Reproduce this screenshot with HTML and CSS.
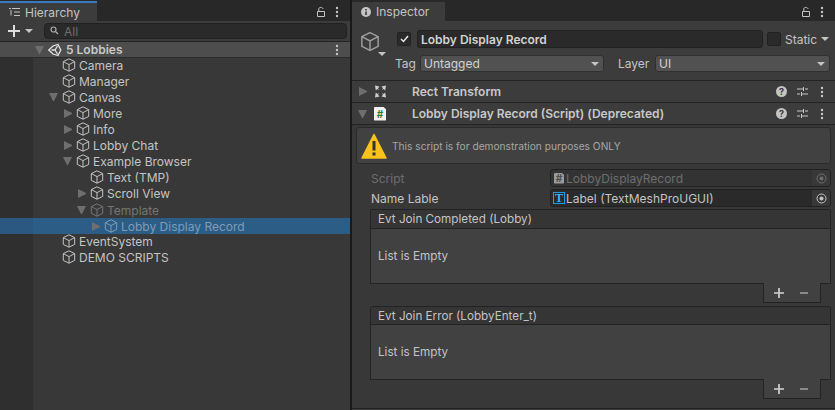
FILE: index.html
```html
<!DOCTYPE html>
<html lang="en">
<head>
    <meta charset="UTF-8">
    <title>Hierarchy / Inspector</title>
    <link rel="stylesheet" href="styles.css">
</head>
<body>

    <svg class="defs" width="0" height="0">
        <symbol id="cube" viewBox="0 0 14 14">
            <path d="M7 .8 12.700 3.600v6.800L7 13.200 1.300 10.400V3.600zM1.300 3.600 7 6.600l5.700-3M7 6.600v6.600" fill="none" stroke="currentColor" stroke-width="1"/>
        </symbol>
        <symbol id="dots" viewBox="0 0 4 12">
            <circle cx="2" cy="2" r="1.200" fill="currentColor"/><circle cx="2" cy="6" r="1.200" fill="currentColor"/><circle cx="2" cy="10" r="1.200" fill="currentColor"/>
        </symbol>
        <symbol id="lock" viewBox="0 0 10 12">
            <path d="M1.500 5.500h7v5h-7zM2.800 5.500V3C2.800 .8 6.800 .8 7 3" fill="none" stroke="currentColor" stroke-width="1"/>
        </symbol>
        <symbol id="sliders" viewBox="0 0 11 11">
            <path d="M0 3h6M8 3h3M6.500 1v4M0 8h3M5 8h6M4.500 6v4" fill="none" stroke="currentColor" stroke-width="1"/>
        </symbol>
        <symbol id="target" viewBox="0 0 11 11">
            <circle cx="5.500" cy="5.500" r="4.500" fill="none" stroke="currentColor"/><circle cx="5.500" cy="5.500" r="2" fill="currentColor"/>
        </symbol>
        <symbol id="plus" viewBox="0 0 12 12">
            <path d="M6 0v12M0 6h12" stroke="currentColor" stroke-width="2"/>
        </symbol>
    </svg>

    <div class="window">
        <section class="panel hierarchy">
            <div class="tabstrip">
                <div class="tab tab-h">
                    <svg class="tab-icon" width="11" height="10" viewBox="0 0 11 10"><path d="M3 1.500h8M5 5h6M5 8.500h6M0 1.500h2M2 3v5.500" stroke="#c4c4c4" fill="none"/></svg>
                    Hierarchy
                </div>
                <div class="tab-tools">
                    <svg width="10" height="12"><use href="#lock"/></svg>
                    <svg width="4" height="12"><use href="#dots"/></svg>
                </div>
            </div>
            <div class="toolbar">
                <svg class="plus" width="12" height="12"><use href="#plus"/></svg><span class="caret"></span>
                <div class="search">
                    <svg width="10" height="10" viewBox="0 0 10 10"><circle cx="3.500" cy="3.500" r="2.500" fill="none" stroke="#b0b0b0" stroke-width="1.200"/><path d="M5.500 5.500 8 8" stroke="#b0b0b0" stroke-width="1.200"/></svg>
                    <span>All</span>
                </div>
            </div>
            <div class="tree">
                <div class="scene">
                    <span class="arrow down"></span>
                    <svg class="unity" width="14" height="14" viewBox="0 0 14 14"><path d="M.8 7 5 3 10 1.500 12.800 7 10 12.500 5 11zM3.500 7H7l2.500-4M7 7l2.500 4" fill="none" stroke="#e4e4e4" stroke-width="1.300"/></svg>
                    <b>5 Lobbies</b>
                    <svg class="scene-dots" width="4" height="12"><use href="#dots"/></svg>
                </div>
                <div class="row d1"><span class="arrow none"></span><svg class="cube"><use href="#cube"/></svg>Camera</div>
                <div class="row d1"><span class="arrow none"></span><svg class="cube"><use href="#cube"/></svg>Manager</div>
                <div class="row d1"><span class="arrow down"></span><svg class="cube"><use href="#cube"/></svg>Canvas</div>
                <div class="row d2"><span class="arrow right"></span><svg class="cube"><use href="#cube"/></svg>More</div>
                <div class="row d2"><span class="arrow right"></span><svg class="cube"><use href="#cube"/></svg>Info</div>
                <div class="row d2"><span class="arrow right"></span><svg class="cube"><use href="#cube"/></svg>Lobby Chat</div>
                <div class="row d2"><span class="arrow down"></span><svg class="cube"><use href="#cube"/></svg>Example Browser</div>
                <div class="row d3"><span class="arrow none"></span><svg class="cube"><use href="#cube"/></svg>Text (TMP)</div>
                <div class="row d3"><span class="arrow right"></span><svg class="cube"><use href="#cube"/></svg>Scroll View</div>
                <div class="row d3 off"><span class="arrow down"></span><svg class="cube"><use href="#cube"/></svg>Template</div>
                <div class="row d4 off selected"><span class="arrow right"></span><svg class="cube"><use href="#cube"/></svg>Lobby Display Record</div>
                <div class="row d1"><span class="arrow none"></span><svg class="cube"><use href="#cube"/></svg>EventSystem</div>
                <div class="row d1"><span class="arrow none"></span><svg class="cube"><use href="#cube"/></svg>DEMO SCRIPTS</div>
            </div>
        </section>

        <section class="panel inspector">
            <div class="tabstrip">
                <div class="tab tab-i">
                    <svg class="tab-icon" width="10" height="10" viewBox="0 0 10 10"><circle cx="5" cy="5" r="5" fill="#c4c4c4"/><path d="M5 2v1.500M5 4.500V8" stroke="#3c3c3c" stroke-width="1.600"/></svg>
                    Inspector
                </div>
                <div class="tab-tools">
                    <svg width="10" height="12"><use href="#lock"/></svg>
                    <svg width="4" height="12"><use href="#dots"/></svg>
                </div>
            </div>

            <div class="object-head">
                <div class="big-cube">
                    <svg width="20" height="21"><use href="#cube"/></svg>
                    <span class="caret small"></span>
                </div>
                <div class="head-fields">
                    <div class="head-row">
                        <span class="check on"><svg width="9" height="8" viewBox="0 0 9 8"><path d="M1 4l2.500 2.500L8 1" fill="none" stroke="#eee" stroke-width="1.400"/></svg></span>
                        <div class="name-field">Lobby Display Record</div>
                        <span class="check"></span>
                        <span class="static">Static</span><span class="caret"></span>
                    </div>
                    <div class="head-row tag-row">
                        <span class="tag-label">Tag</span>
                        <div class="dropdown tag-drop">Untagged<span class="caret"></span></div>
                        <span class="layer-label">Layer</span>
                        <div class="dropdown layer-drop">UI<span class="caret"></span></div>
                    </div>
                </div>
            </div>

            <div class="component">
                <span class="arrow right"></span>
                <svg class="comp-icon" width="13" height="13" viewBox="0 0 13 13"><path d="M1 .5 5.500 1.500 4 3.200 5.200 5 3.400 4 1.800 5.500zM12 .5 7.500 1.500 9 3.200 7.800 5 9.600 4 11.200 5.500zM1 12.500 5.500 11.500 4 9.800 5.200 8 3.400 9 1.800 7.500zM12 12.500 7.500 11.500 9 9.800 7.800 8 9.600 9 11.200 7.500z" fill="#cfcfcf"/></svg>
                <b>Rect Transform</b>
                <span class="comp-tools">
                    <span class="help">?</span>
                    <svg class="sliders" width="11" height="11"><use href="#sliders"/></svg>
                    <svg width="4" height="12"><use href="#dots"/></svg>
                </span>
            </div>
            <div class="component">
                <span class="arrow down"></span>
                <span class="script-icon">#</span>
                <b>Lobby Display Record (Script) (Deprecated)</b>
                <span class="comp-tools">
                    <span class="help">?</span>
                    <svg class="sliders" width="11" height="11"><use href="#sliders"/></svg>
                    <svg width="4" height="12"><use href="#dots"/></svg>
                </span>
            </div>

            <div class="comp-body">
                <div class="warning">
                    <svg width="26" height="26" viewBox="0 0 26 26"><path d="M13 1.500 25 25H1z" fill="#fcc21b" stroke="#fcc21b" stroke-width="1.500" stroke-linejoin="round"/><path d="M13 8v9.500M13 19.500v3" stroke="#333" stroke-width="3"/></svg>
                    <span>This script is for demonstration purposes ONLY</span>
                </div>

                <div class="prop off">
                    <span class="prop-label">Script</span>
                    <div class="objfield">
                        <span class="script-icon mini">#</span>LobbyDisplayRecord
                        <span class="pick"><svg width="11" height="11"><use href="#target"/></svg></span>
                    </div>
                </div>
                <div class="prop">
                    <span class="prop-label">Name Lable</span>
                    <div class="objfield">
                        <span class="tmp-icon">T</span>Label (TextMeshProUGUI)
                        <span class="pick"><svg width="11" height="11"><use href="#target"/></svg></span>
                    </div>
                </div>

                <div class="list">
                    <div class="list-head">Evt Join Completed (Lobby)</div>
                    <div class="list-body">List is Empty</div>
                    <div class="list-foot"><svg class="add" width="10" height="10"><use href="#plus"/></svg><span class="rem"></span></div>
                </div>
                <div class="list">
                    <div class="list-head">Evt Join Error (LobbyEnter_t)</div>
                    <div class="list-body">List is Empty</div>
                    <div class="list-foot"><svg class="add" width="10" height="10"><use href="#plus"/></svg><span class="rem"></span></div>
                </div>
            </div>
            <div class="end-line"></div>
        </section>
    </div>

</body>
</html>
```

FILE: styles.css
```css
* {
    box-sizing: border-box;
}
html, body {
    margin: 0;
    height: 100%;
    overflow: hidden;
}
body {
    font-family: Inter, "Liberation Sans", sans-serif;
    font-size: 12px;
    color: #c4c4c4;
    background: #191919;
}
b {
    font-weight: 600;
}
.defs {
    position: absolute;
}
.window {
    display: flex;
    height: 410px;
    gap: 2px;
}
.panel {
    background: #383838;
    height: 100%;
}
.hierarchy {
    width: 350px;
}
.inspector {
    width: 483px;
    flex: none;
}

/* tabs */
.tabstrip {
    display: flex;
    height: 21px;
    background: #282828;
    padding-top: 2px;
}
.tab {
    display: flex;
    align-items: center;
    gap: 5px;
    height: 19px;
    background: #3c3c3c;
    color: #c4c4c4;
    font-size: 12px;
    padding-left: 9px;
}
.tab-h {
    width: 97px;
    border-top: 2px solid #3a79bb;
    margin-top: -1px;
    height: 20px;
}
.tab-i {
    width: 93px;
}
.tab-tools {
    margin-left: auto;
    display: flex;
    align-items: center;
    gap: 9px;
    padding-right: 11px;
    color: #c4c4c4;
}
.toolbar {
    display: flex;
    align-items: center;
    height: 21px;
    background: #3c3c3c;
    border-bottom: 1px solid #232323;
    padding-left: 8px;
}
.plus {
    color: #dcdcdc;
    margin-right: 5px;
}
.caret {
    display: inline-block;
    border-left: 4px solid transparent;
    border-right: 4px solid transparent;
    border-top: 4px solid #c4c4c4;
}
.search {
    display: flex;
    align-items: center;
    gap: 4px;
    width: 303px;
    height: 16px;
    margin-left: 11px;
    padding-left: 5px;
    background: #2a2a2a;
    border: 1px solid #212121;
    border-radius: 4px;
    color: #6f6f6f;
}

/* tree */
.tree {
    height: 368px;
    background: linear-gradient(to right, #2f2f2f 33px, #383838 33px);
}
.scene {
    display: flex;
    align-items: center;
    height: 16px;
    background: #4d4d4d;
    padding-left: 34px;
    border-bottom: 1px solid #2a2a2a;
    color: #c8c8c8;
}
.scene .unity {
    margin-right: 4px;
}
.scene-dots {
    margin-left: auto;
    margin-right: 11px;
    color: #c4c4c4;
}
.row {
    display: flex;
    align-items: center;
    height: 16px;
    padding-bottom: 2px;
    color: #c4c4c4;
}
.row .cube {
    width: 14px;
    height: 14px;
    margin-right: 3px;
    flex: none;
}
.d1 { padding-left: 48px; }
.d2 { padding-left: 62px; }
.d3 { padding-left: 76px; }
.d4 { padding-left: 90px; }
.row.off {
    padding-bottom: 0;
    color: #757575;
}
.row.selected {
    background: linear-gradient(to right, #2a5880 33px, #2c5d87 33px);
    color: #7f9cb4;
}
.arrow {
    display: inline-block;
    flex: none;
    width: 14px;
    height: 8px;
}
.arrow.down {
    width: 9px;
    margin-right: 4px;
    margin-left: 1px;
    border-left: 4.500px solid transparent;
    border-right: 4.500px solid transparent;
    border-top: 8px solid #6e6e6e;
}
.arrow.right {
    width: 8px;
    margin-left: 2px;
    margin-right: 4px;
    border-top: 4.500px solid transparent;
    border-bottom: 4.500px solid transparent;
    border-left: 8px solid #6e6e6e;
    height: 9px;
}

/* object header */
.object-head {
    display: flex;
    height: 60px;
    background: #3c3c3c;
    border-bottom: 1px solid #232323;
    padding: 9px 5px 0 8px;
}
.big-cube {
    width: 38px;
    padding-top: 1px;
    color: #a0a0a0;
    position: relative;
}
.big-cube .caret {
    position: absolute;
    left: 18px;
    top: 22px;
    border-width: 4px 4px 0;
}
.head-fields {
    flex: 1;
}
.head-row {
    display: flex;
    align-items: center;
    height: 18px;
}
.check {
    display: flex;
    align-items: center;
    justify-content: center;
    width: 14px;
    height: 14px;
    margin-left: 2px;
    background: #2a2a2a;
    border: 1px solid #212121;
    border-radius: 2px;
}
.name-field {
    width: 346px;
    height: 18px;
    margin: 0 2px 0 6px;
    padding: 1px 3px;
    background: #2a2a2a;
    border: 1px solid #212121;
    border-radius: 3px;
    font-weight: 600;
    color: #d2d2d2;
}
.static {
    margin: 0 4px;
}
.tag-row {
    margin-top: 7px;
    height: 17px;
}
.tag-label {
    width: 25px;
    color: #c4c4c4;
}
.dropdown {
    display: flex;
    align-items: center;
    height: 17px;
    background: #515151;
    border: 1px solid #303030;
    border-radius: 3px;
    padding: 0 3px;
    color: #d2d2d2;
}
.dropdown .caret {
    margin-left: auto;
    margin-right: 1px;
}
.tag-drop {
    width: 184px;
}
.layer-label {
    margin: 0 5px 0 14px;
    width: 32px;
}
.layer-drop {
    width: 175px;
}

/* components */
.component {
    display: flex;
    align-items: center;
    height: 22px;
    background: #3c3c3c;
    border-bottom: 1px solid #232323;
    padding-left: 5px;
    color: #c8c8c8;
}
.component .arrow.down {
    margin-left: 1px;
    margin-right: 5px;
}
.comp-icon {
    margin-left: 3px;
    flex: none;
}
.comp-icon + b {
    margin-left: 25px;
}
.component .script-icon {
    margin-left: 2px;
}
.script-icon + b {
    margin-left: 26px;
}
.script-icon {
    display: inline-flex;
    align-items: center;
    justify-content: center;
    flex: none;
    width: 12px;
    height: 14px;
    background: #f2f2f2;
    color: #2c7a34;
    font-size: 10px;
    font-weight: 700;
    border-radius: 1px;
    clip-path: polygon(0 0, 75% 0, 100% 20%, 100% 100%, 0 100%);
}
.script-icon.mini {
    width: 10px;
    height: 11px;
    background: #9a9a9a;
    color: #4c4c4c;
    margin-right: 2px;
    margin-left: 2px;
}
.comp-tools {
    margin-left: auto;
    display: flex;
    align-items: center;
    padding-right: 11px;
}
.sliders {
    margin: 0 12px 0 10px;
}
.help {
    display: flex;
    align-items: center;
    justify-content: center;
    width: 11px;
    height: 11px;
    border-radius: 50%;
    background: #c4c4c4;
    color: #383838;
    font-size: 9px;
    font-weight: 700;
}

/* component body */
.comp-body {
    padding: 2px 4px 0 4px;
}
.warning {
    display: flex;
    align-items: center;
    gap: 5px;
    height: 37px;
    background: #414141;
    border: 1px solid #2a2a2a;
    border-radius: 3px;
    padding-left: 4px;
    font-size: 10.200px;
    color: #a6a6a6;
}
.prop {
    display: flex;
    align-items: center;
    height: 18px;
    margin-top: 2px;
    padding-left: 15px;
    color: #c4c4c4;
}
.warning + .prop {
    margin-top: 5px;
}
.prop.off {
    color: #6e6e6e;
}
.prop-label {
    width: 179px;
}
.objfield {
    display: flex;
    align-items: center;
    flex: 1;
    height: 18px;
    background: #2a2a2a;
    border: 1px solid #212121;
    border-radius: 3px;
    padding-left: 1px;
}
.prop.off .objfield {
    background: #333;
}
.tmp-icon {
    display: inline-flex;
    align-items: center;
    justify-content: center;
    width: 12px;
    height: 12px;
    margin: 0 1px;
    border: 1px solid #1f9be6;
    color: #3fb4f4;
    font-family: "Liberation Serif", serif;
    font-size: 12px;
    font-weight: 700;
}
.pick {
    display: flex;
    align-items: center;
    justify-content: center;
    width: 18px;
    height: 16px;
    margin-left: auto;
    background: #383838;
    border-radius: 0 2px 2px 0;
}

/* lists */
.list {
    margin-left: 14px;
    font-size: 11.700px;
}
.list + .list {
    margin-top: 3px;
}
.prop + .list {
    margin-top: 2px;
}
.list-head {
    height: 20px;
    padding: 2px 0 0 7px;
    background: #353535;
    border: 1px solid #232323;
    border-radius: 2px 2px 0 0;
    color: #c4c4c4;
}
.list + .list .list-head {
    height: 19px;
}
.list-body {
    display: flex;
    align-items: center;
    height: 55px;
    padding-left: 7px;
    background: #414141;
    border: 1px solid #232323;
    border-top: 0;
}
.list-foot {
    display: flex;
    align-items: center;
    height: 20px;
    width: 58px;
    margin: -1px 10px 0 auto;
    padding: 0 0 0 10px;
    gap: 16px;
    background: #414141;
    border: 1px solid #232323;
    border-top: 0;
    position: relative;
}
.add {
    color: #d2d2d2;
}
.rem {
    width: 8px;
    height: 2px;
    background: #8a8a8a;
}
.end-line {
    height: 1px;
    margin-top: 9px;
    background: #232323;
}
```
